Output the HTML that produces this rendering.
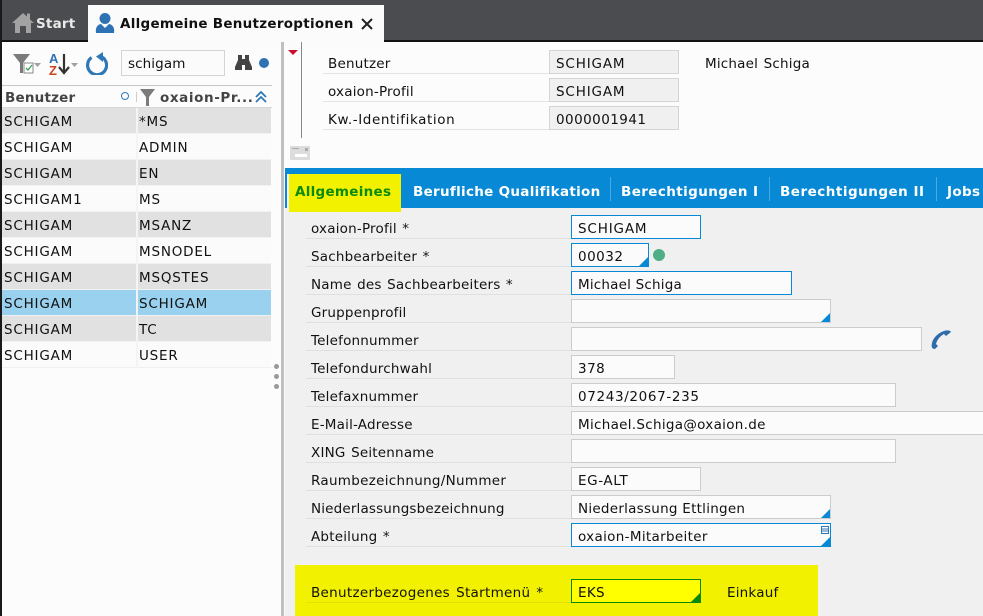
<!DOCTYPE html>
<html><head><meta charset="utf-8"><style>
html,body{margin:0;padding:0;background:#fcfcfc}
#p{position:relative;width:983px;height:616px;overflow:hidden;background:#fcfcfc;font-family:"DejaVu Sans","Liberation Sans",sans-serif;font-size:13.5px;color:#111}
#p div,#p svg{position:absolute}
.t{white-space:nowrap;line-height:18px;letter-spacing:.2px;word-spacing:1px}
.l{left:306px;width:265px;height:1px;background:#e0e0e0}
.i{box-sizing:border-box;height:24px;background:#fbfbfb;border:1px solid #ccc;padding-left:6px;line-height:26px;white-space:nowrap;color:#111;letter-spacing:.3px}
.b{border-color:#0789d6}
.c{width:0;height:0;border-style:solid;border-width:0 0 9px 9px;border-color:transparent transparent #0789d6 transparent;right:0;bottom:0}
.r{left:2px;width:269px;height:25px;border-bottom:1px solid #f0f0f0;background:#fbfbfb}
.g{background:#e1e1e1;border-bottom-color:#f2f2f2}
.r div{top:5px;line-height:18px;white-space:nowrap;letter-spacing:.8px}
.r .s{left:134px;top:0;width:2px;height:26px;background:#f4f4f4}
.u{letter-spacing:.85px}
.tb{top:183px;color:#fff;font-weight:bold;font-size:13.5px;line-height:18px;white-space:nowrap;letter-spacing:.35px}
.sep{top:177px;width:1px;height:24px;background:#4aa8e2}
</style></head><body><div id="p">
<!-- top bar -->
<div style="left:0;top:0;width:983px;height:42px;background:#4a4c50"></div>
<div style="left:0;top:0;width:2px;height:616px;background:#1a1a1a"></div>
<div style="left:88px;top:5px;width:296px;height:37px;background:#fbfbfb"></div>
<div style="left:384px;top:40px;width:599px;height:2px;background:#111"></div>
<div style="left:2px;top:40px;width:86px;height:2px;background:#111"></div>
<svg style="left:12px;top:12px" width="22" height="22" viewBox="0 0 22 22"><path d="M0 11 L11 1 L15 4.5 L15 1.5 L18 1.5 L18 7.5 L22 11 L19 11 L19 21 L14 21 L14 14 L8 14 L8 21 L3 21 L3 11Z" fill="#a2a2a2"/></svg>
<div class="t" style="left:36px;top:15px;color:#e9e9e9;font-weight:bold;font-size:13.5px">Start</div>
<svg style="left:95px;top:12px" width="20" height="22" viewBox="0 0 20 22"><circle cx="10" cy="6.5" r="5.5" fill="#2f72b4"/><path d="M1 21 C0 15 3 12.5 6 12 L10 16 L14 12 C17 12.5 20 15 19 21Z" fill="#2f72b4"/></svg>
<div class="t" style="left:120px;top:15px;color:#111;font-weight:bold;font-size:13.5px;letter-spacing:.27px;word-spacing:0">Allgemeine Benutzeroptionen</div>
<svg style="left:361px;top:18px" width="12" height="12" viewBox="0 0 12 12"><path d="M1 1 L11 11 M11 1 L1 11" stroke="#222" stroke-width="2"/></svg>

<!-- left toolbar -->
<svg style="left:12px;top:53px" width="30" height="22" viewBox="0 0 30 22"><path d="M1 1 H18 L11 10 V20 H8 V10Z" fill="#7b7b7b"/><rect x="12" y="10" width="9" height="10" fill="#fff" stroke="#888"/><path d="M14 15 l2 2 l4 -5" stroke="#3aa05a" stroke-width="1.3" fill="none"/><path d="M22 10 h7 l-3.5 4z" fill="#a0a0a0"/></svg>
<svg style="left:47px;top:52px" width="32" height="24" viewBox="0 0 32 24"><text x="2" y="11" font-family="Liberation Sans" font-size="13" fill="#2f72b4" font-weight="bold">A</text><text x="2" y="23" font-family="Liberation Sans" font-size="13" fill="#d0401c" font-weight="bold">Z</text><path d="M17 2 V21 M12 15 L17 21 L22 15" stroke="#333" stroke-width="2.2" fill="none"/><path d="M24 11 h7 l-3.5 4z" fill="#a0a0a0"/></svg>
<svg style="left:85px;top:52px" width="23" height="23" viewBox="0 0 23 23"><path d="M6.5 5.5 A9.5 9.5 0 1 0 14.5 4" stroke="#2f78b8" stroke-width="3.2" fill="none"/><path d="M18 0 V10 L11 4.5Z" fill="#2f78b8"/></svg>
<div class="i" style="left:121px;top:50px;width:104px;height:26px;line-height:26px;border:1px solid #d4d4d4;padding-left:6px;letter-spacing:.1px">schigam</div>
<svg style="left:235px;top:54px" width="17" height="17" viewBox="0 0 17 17"><path d="M3 1 h4 v4 h3 v-4 h4 v5 l3 7 v3 h-7 v-5 h-3 v5 h-7 v-3 l3 -7z" fill="#444"/></svg>
<div style="left:259px;top:58px;width:10px;height:10px;border-radius:5px;background:#2f72b4"></div>

<!-- table header -->
<div style="left:2px;top:85px;width:270px;height:1px;background:#c8c8c8"></div>
<div style="left:2px;top:107px;width:270px;height:1px;background:#d8d8d8"></div>
<div class="t" style="left:5px;top:89px;font-weight:bold;color:#444;font-size:13.5px">Benutzer</div>
<div style="left:121px;top:92px;width:6px;height:6px;border:1.5px solid #2f78b8;border-radius:5px"></div>
<div style="left:136px;top:92px;width:1px;height:10px;background:#ccc"></div>
<svg style="left:140px;top:89px" width="15" height="17" viewBox="0 0 15 17"><path d="M0 0 H15 L9 8 V17 H6 V8Z" fill="#7b7b7b"/></svg>
<div class="t" style="left:160px;top:89px;font-weight:bold;color:#444;font-size:13.5px;letter-spacing:.6px">oxaion-Pr...</div>
<svg style="left:255px;top:91px" width="12" height="12" viewBox="0 0 12 12"><path d="M1 6 L6 1 L11 6 M1 11 L6 6 L11 11" stroke="#2f78b8" stroke-width="1.8" fill="none"/></svg>

<!-- rows -->
<div class="r g" style="top:108px"><div style="left:2px">SCHIGAM</div><div class="s"></div><div style="left:137px">*MS</div></div>
<div class="r" style="top:134px"><div style="left:2px">SCHIGAM</div><div class="s"></div><div style="left:137px">ADMIN</div></div>
<div class="r g" style="top:160px"><div style="left:2px">SCHIGAM</div><div class="s"></div><div style="left:137px">EN</div></div>
<div class="r" style="top:186px"><div style="left:2px">SCHIGAM1</div><div class="s"></div><div style="left:137px">MS</div></div>
<div class="r g" style="top:212px"><div style="left:2px">SCHIGAM</div><div class="s"></div><div style="left:137px">MSANZ</div></div>
<div class="r" style="top:238px"><div style="left:2px">SCHIGAM</div><div class="s"></div><div style="left:137px">MSNODEL</div></div>
<div class="r g" style="top:264px"><div style="left:2px">SCHIGAM</div><div class="s"></div><div style="left:137px">MSQSTES</div></div>
<div class="r" style="top:290px;background:#9ad1ef"><div style="left:2px">SCHIGAM</div><div class="s"></div><div style="left:137px">SCHIGAM</div></div>
<div class="r g" style="top:316px"><div style="left:2px">SCHIGAM</div><div class="s"></div><div style="left:137px">TC</div></div>
<div class="r" style="top:342px"><div style="left:2px">SCHIGAM</div><div class="s"></div><div style="left:137px">USER</div></div>

<!-- splitter -->
<div style="left:281px;top:42px;width:3px;height:574px;background:#c0c0c0"></div>
<div style="left:274px;top:364px;width:5px;height:5px;border-radius:3px;background:#999"></div>
<div style="left:274px;top:374px;width:5px;height:5px;border-radius:3px;background:#999"></div>
<div style="left:274px;top:384px;width:5px;height:5px;border-radius:3px;background:#999"></div>

<!-- header section -->
<div style="left:288px;top:50px;width:0;height:0;border-style:solid;border-width:5px 5px 0 5px;border-color:#c8102e transparent transparent transparent"></div>
<div style="left:301px;top:42px;width:1px;height:96px;background:#888"></div>
<svg style="left:290px;top:146px" width="20" height="14" viewBox="0 0 20 14"><rect width="20" height="14" fill="#dcdcdc"/><rect x="5" y="8" width="12" height="3" fill="#fff"/><rect x="2" y="2" width="7" height="1" fill="#aaa"/><rect x="15" y="2" width="3" height="3" fill="#aaa"/></svg>
<div class="t" style="left:328px;top:55px">Benutzer</div>
<div class="t" style="left:328px;top:83px">oxaion-Profil</div>
<div class="t" style="left:328px;top:111px;letter-spacing:.6px">Kw.-Identifikation</div>
<div style="left:323px;top:73px;width:226px;height:1px;background:#e4e4e4"></div>
<div style="left:323px;top:101px;width:226px;height:1px;background:#e4e4e4"></div>
<div style="left:323px;top:129px;width:226px;height:1px;background:#e4e4e4"></div>
<div class="i u" style="left:549px;top:50px;width:130px;border-color:#d4d4d4;background:#f0f0f0">SCHIGAM</div>
<div class="i u" style="left:549px;top:78px;width:130px;border-color:#d4d4d4;background:#f0f0f0">SCHIGAM</div>
<div class="i" style="left:549px;top:106px;width:130px;border-color:#d4d4d4;background:#f0f0f0;letter-spacing:.45px">0000001941</div>
<div class="t" style="left:705px;top:55px">Michael Schiga</div>

<!-- tab bar and form bg -->
<div style="left:285px;top:168px;width:698px;height:448px;background:#f0f0f0"></div>
<div style="left:285px;top:168px;width:698px;height:40px;background:#0789d6"></div>
<div style="left:287px;top:174px;width:2px;height:34px;background:#f0f0f0"></div>
<div style="left:289px;top:174px;width:112px;height:38px;background:#f2f200"></div>
<div class="tb" style="left:295px;color:#0b8a0b;letter-spacing:.28px">Allgemeines</div>
<div class="tb" style="left:413px;letter-spacing:.3px">Berufliche Qualifikation</div>
<div class="sep" style="left:610px"></div>
<div class="tb" style="left:621px;letter-spacing:.4px">Berechtigungen I</div>
<div class="sep" style="left:769px"></div>
<div class="tb" style="left:780px;letter-spacing:.5px">Berechtigungen II</div>
<div class="sep" style="left:936px"></div>
<div class="tb" style="left:947px">Jobs</div>

<!-- form -->
<div class="t" style="left:311px;top:220px">oxaion-Profil *</div><div class="l" style="top:238px"></div>
<div class="i b u" style="left:571px;top:215px;width:130px">SCHIGAM</div>
<div class="t" style="left:311px;top:248px">Sachbearbeiter *</div><div class="l" style="top:266px"></div>
<div class="i b" style="left:571px;top:243px;width:78px;letter-spacing:.5px">00032<div class="c"></div></div>
<div style="left:653px;top:249px;width:12px;height:12px;border-radius:6px;background:#50ae86"></div>
<div class="t" style="left:311px;top:276px">Name des Sachbearbeiters *</div><div class="l" style="top:294px"></div>
<div class="i b" style="left:571px;top:271px;width:221px;letter-spacing:.2px">Michael Schiga</div>
<div class="t" style="left:311px;top:304px">Gruppenprofil</div><div class="l" style="top:322px"></div>
<div class="i" style="left:571px;top:299px;width:260px"><div class="c"></div></div>
<div class="t" style="left:311px;top:332px">Telefonnummer</div><div class="l" style="top:350px"></div>
<div class="i" style="left:571px;top:327px;width:351px"></div>
<svg style="left:931px;top:330px" width="21" height="20" viewBox="0 0 21 20"><path d="M13 1 C16 0 19 0 20 2 L15 6 L13 4 C9 6 6 10 5 14 L7 16 L4 19 C1 19 0 17 1 13 C2 8 7 3 13 1Z" fill="#2f6cab"/></svg>
<div class="t" style="left:311px;top:360px">Telefondurchwahl</div><div class="l" style="top:378px"></div>
<div class="i" style="left:571px;top:355px;width:104px;letter-spacing:.5px">378</div>
<div class="t" style="left:311px;top:388px">Telefaxnummer</div><div class="l" style="top:406px"></div>
<div class="i" style="left:571px;top:383px;width:325px;letter-spacing:.65px">07243/2067-235</div>
<div class="t" style="left:311px;top:416px">E-Mail-Adresse</div><div class="l" style="top:434px"></div>
<div class="i" style="left:571px;top:411px;width:420px">Michael.Schiga@oxaion.de</div>
<div class="t" style="left:311px;top:444px">XING Seitenname</div><div class="l" style="top:462px"></div>
<div class="i" style="left:571px;top:439px;width:325px"></div>
<div class="t" style="left:311px;top:472px;letter-spacing:.3px">Raumbezeichnung/Nummer</div><div class="l" style="top:490px"></div>
<div class="i u" style="left:571px;top:467px;width:130px;letter-spacing:.6px">EG-ALT</div>
<div class="t" style="left:311px;top:500px;letter-spacing:.16px">Niederlassungsbezeichnung</div><div class="l" style="top:518px"></div>
<div class="i" style="left:571px;top:495px;width:260px;letter-spacing:.26px">Niederlassung Ettlingen<div class="c"></div></div>
<div class="t" style="left:311px;top:528px">Abteilung *</div><div class="l" style="top:546px"></div>
<div class="i b" style="left:571px;top:523px;width:260px;letter-spacing:.33px">oxaion-Mitarbeiter<div class="c"></div>
<svg style="right:1px;top:2px" width="8" height="8" viewBox="0 0 8 8"><rect x="0.5" y="0.5" width="7" height="7" fill="none" stroke="#2f78b8"/><path d="M1 3 H7 M1 5 H7" stroke="#2f78b8"/></svg></div>

<!-- yellow block -->
<div style="left:295px;top:565px;width:523px;height:51px;background:#f2f200"></div>
<div class="t" style="left:311px;top:584px;letter-spacing:.3px;word-spacing:1.5px">Benutzerbezogenes Startmenü *</div>
<div class="l" style="top:602px;background:#e2e200"></div>
<div class="i" style="left:571px;top:579px;width:130px;background:#ffff00;border-color:#0a8a0a;color:#111">EKS<div class="c" style="border-color:transparent transparent #0a8a0a transparent"></div></div>
<div class="t" style="left:727px;top:584px">Einkauf</div>
</div></body></html>
